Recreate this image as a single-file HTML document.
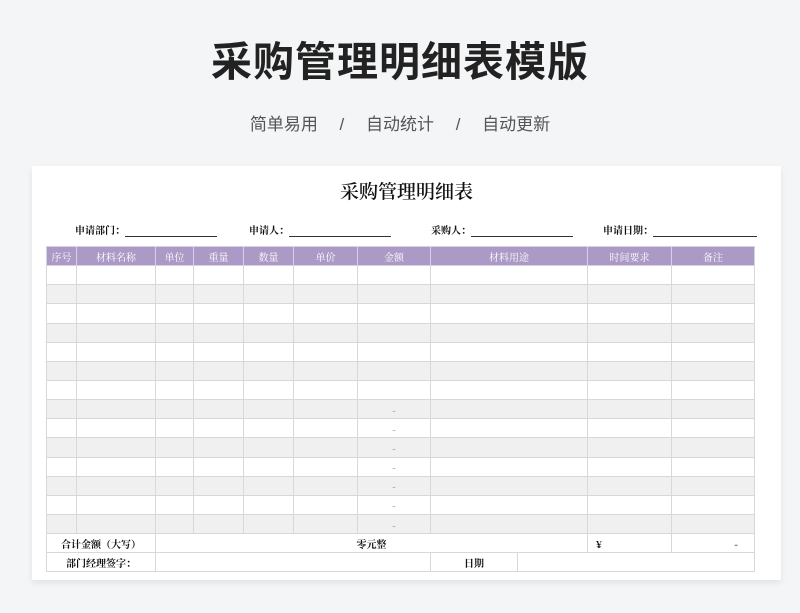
<!DOCTYPE html>
<html><head><meta charset="utf-8"><style>
*{margin:0;padding:0;box-sizing:border-box}
body{width:800px;height:613px;background:#f4f5f7;font-family:"Liberation Sans","Noto Sans CJK SC",sans-serif;position:relative;overflow:hidden}
.t{position:absolute;top:28px;left:0;width:800px;text-align:center;font-size:41px;font-weight:bold;color:#222;letter-spacing:1px}
.s{position:absolute;top:110px;left:0;width:800px;text-align:center;font-size:17px;color:#555;word-spacing:0}
.card{position:absolute;left:32px;top:166px;width:749px;height:414px;background:#fff;box-shadow:0 3px 6px rgba(0,0,0,.08);overflow:hidden}
.h{position:absolute;top:11px;left:0;width:749px;text-align:center;font-family:"Noto Serif CJK SC",serif;font-size:19px;font-weight:600;color:#111}
.f{position:absolute;top:56px;font-family:"Noto Serif CJK SC",serif;font-size:10px;font-weight:bold;color:#111}
.f span{display:inline-block;border-bottom:1px solid #333;height:11px;vertical-align:bottom}
table{position:absolute;left:14px;top:80px;border-collapse:collapse;table-layout:fixed;font-family:"Noto Serif CJK SC",serif;font-size:10px}
td{border:1px solid #d8d8d8;height:19.15px;text-align:center;color:#777;padding:0}
tr.hd td{background:#ab9ac6;color:#fff;border-color:#d8d0e6}
tr.g td{background:#f0f0f0}
tr.b td{color:#111;font-weight:bold;background:#fff}
</style></head><body>
<div class="t">采购管理明细表模版</div>
<div class="s">简单易用　 / 　自动统计　 / 　自动更新</div>
<div class="card">
<div class="h">采购管理明细表</div>
<div class="f" style="left:43px">申请部门：<span style="width:92px"></span></div>
<div class="f" style="left:217px">申请人：<span style="width:102px"></span></div>
<div class="f" style="left:399px">采购人：<span style="width:102px"></span></div>
<div class="f" style="left:571px">申请日期：<span style="width:104px"></span></div>
<table>
<colgroup><col style="width:30px"><col style="width:79px"><col style="width:38px"><col style="width:50px"><col style="width:50px"><col style="width:64px"><col style="width:73px"><col style="width:87px"><col style="width:70px"><col style="width:84px"><col style="width:83px"></colgroup>
<tr class="hd"><td>序号</td><td>材料名称</td><td>单位</td><td>重量</td><td>数量</td><td>单价</td><td>金额</td><td colspan="2">材料用途</td><td>时间要求</td><td>备注</td></tr>
<tr><td></td><td></td><td></td><td></td><td></td><td></td><td></td><td colspan="2"></td><td></td><td></td></tr>
<tr class="g"><td></td><td></td><td></td><td></td><td></td><td></td><td></td><td colspan="2"></td><td></td><td></td></tr>
<tr><td></td><td></td><td></td><td></td><td></td><td></td><td></td><td colspan="2"></td><td></td><td></td></tr>
<tr class="g"><td></td><td></td><td></td><td></td><td></td><td></td><td></td><td colspan="2"></td><td></td><td></td></tr>
<tr><td></td><td></td><td></td><td></td><td></td><td></td><td></td><td colspan="2"></td><td></td><td></td></tr>
<tr class="g"><td></td><td></td><td></td><td></td><td></td><td></td><td></td><td colspan="2"></td><td></td><td></td></tr>
<tr><td></td><td></td><td></td><td></td><td></td><td></td><td></td><td colspan="2"></td><td></td><td></td></tr>
<tr class="g"><td></td><td></td><td></td><td></td><td></td><td></td><td>-</td><td colspan="2"></td><td></td><td></td></tr>
<tr><td></td><td></td><td></td><td></td><td></td><td></td><td>-</td><td colspan="2"></td><td></td><td></td></tr>
<tr class="g"><td></td><td></td><td></td><td></td><td></td><td></td><td>-</td><td colspan="2"></td><td></td><td></td></tr>
<tr><td></td><td></td><td></td><td></td><td></td><td></td><td>-</td><td colspan="2"></td><td></td><td></td></tr>
<tr class="g"><td></td><td></td><td></td><td></td><td></td><td></td><td>-</td><td colspan="2"></td><td></td><td></td></tr>
<tr><td></td><td></td><td></td><td></td><td></td><td></td><td>-</td><td colspan="2"></td><td></td><td></td></tr>
<tr class="g"><td></td><td></td><td></td><td></td><td></td><td></td><td>-</td><td colspan="2"></td><td></td><td></td></tr>
<tr class="b"><td colspan="2">合计金额（大写）</td><td colspan="7">零元整</td><td style="text-align:left;padding-left:8px">¥</td><td style="text-align:right;padding-right:16px">-</td></tr>
<tr class="b"><td colspan="2">部门经理签字：</td><td colspan="5"></td><td>日期</td><td colspan="3"></td></tr>
</table>
</div>
</body></html>
